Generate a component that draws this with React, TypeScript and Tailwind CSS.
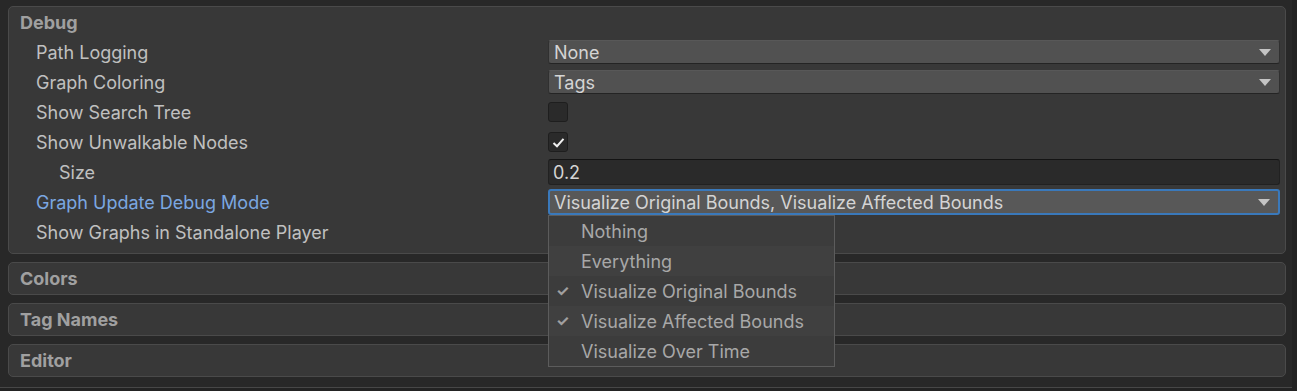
const font = { fontFamily: "Inter, 'Noto Sans', sans-serif" };

function Arrow() {
  return (
    <svg width="12" height="7" viewBox="0 0 12 7" className="shrink-0">
      <path d="M0 0 H12 L6 7 Z" fill="#c4c4c4" />
    </svg>
  );
}

function Dropdown({ value, focused }: { value: string; focused?: boolean }) {
  return (
    <div
      className={`flex flex-1 items-center justify-between rounded-[3px] pr-[8px] ${
        focused
          ? "h-[26px] border-2 border-[#3a79bb] bg-[#585858] pl-[4px]"
          : "h-[24px] border border-[#303030] border-t-[#585858] border-b-[#242424] bg-[#515151] pl-[5px]"
      }`}
    >
      <span className="text-[#d4d4d4]">{value}</span>
      <Arrow />
    </div>
  );
}

function Checkbox({ checked }: { checked?: boolean }) {
  return (
    <div className="flex h-[20px] w-[20px] items-center justify-center rounded-[3px] border border-[#1e1e1e] bg-[#2a2a2a]">
      {checked && (
        <svg width="13" height="11" viewBox="0 0 13 11">
          <path d="M1.5 6 L5 9.2 L11.5 1.8" fill="none" stroke="#f0f0f0" strokeWidth="2" />
        </svg>
      )}
    </div>
  );
}

function Row({
  label,
  indent,
  blue,
  children,
}: {
  label: string;
  indent?: boolean;
  blue?: boolean;
  children?: React.ReactNode;
}) {
  return (
    <div className="flex h-[30px] items-center">
      <div
        className={`w-[539px] shrink-0 ${indent ? "pl-[50px]" : "pl-[27px]"} ${
          blue ? "text-[#7ba7e1]" : "text-[#c0c0c0]"
        }`}
      >
        {label}
      </div>
      <div className="flex flex-1 items-center">{children}</div>
    </div>
  );
}

function Section({ title }: { title: string }) {
  return (
    <div className="flex h-[33px] items-center rounded-[5px] border border-[#4a4a4a] bg-[#383838] pl-[11px]">
      <span className="text-[18px] font-bold text-[#a0a0a0]">{title}</span>
    </div>
  );
}

const menu = [
  { label: "Nothing", checked: false },
  { label: "Everything", checked: false },
  { label: "Visualize Original Bounds", checked: true },
  { label: "Visualize Affected Bounds", checked: true },
  { label: "Visualize Over Time", checked: false },
];

export default function App() {
  return (
    <div
      className="flex h-[391px] w-[1297px] overflow-hidden bg-[#282828] text-[18px]"
      style={font}
    >
      <div className="flex flex-1 flex-col">
        <div className="flex flex-1 flex-col gap-[8px] pl-[8px] pr-[6px] pt-[6px]">
          <div className="relative flex h-[248px] flex-col rounded-[5px] border border-[#4a4a4a] bg-[#383838] pr-[5px]">
            <div className="flex h-[30px] items-center pl-[11px]">
              <span className="text-[18px] font-bold text-[#a0a0a0]">Debug</span>
            </div>
            <Row label="Path Logging">
              <Dropdown value="None" />
            </Row>
            <Row label="Graph Coloring">
              <Dropdown value="Tags" />
            </Row>
            <Row label="Show Search Tree">
              <Checkbox />
            </Row>
            <Row label="Show Unwalkable Nodes">
              <Checkbox checked />
            </Row>
            <Row label="Size" indent>
              <div className="flex h-[26px] flex-1 items-center rounded-[3px] border border-[#212121] border-t-[#141414] bg-[#2a2a2a] pl-[4px] text-[#d4d4d4]">
                0.2
              </div>
            </Row>
            <Row label="Graph Update Debug Mode" blue>
              <Dropdown value="Visualize Original Bounds, Visualize Affected Bounds" focused />
            </Row>
            <Row label="Show Graphs in Standalone Player" />

            <div className="absolute left-[539px] top-[208px] z-10 flex w-[287px] flex-col border border-[#5c5c5c] bg-[#3c3c3c]">
              {menu.map((m, i) => (
                <div
                  key={m.label}
                  className={`flex h-[30px] items-center ${i % 2 === 1 ? "bg-[#404040]" : "bg-[#3c3c3c]"}`}
                >
                  <span className="w-[32px] pl-[7px] text-[15px] font-bold text-[#a0a0a0]">{m.checked ? "✓" : ""}</span>
                  <span className="text-[#a8a8a8]">{m.label}</span>
                </div>
              ))}
            </div>
          </div>
          <Section title="Colors" />
          <Section title="Tag Names" />
          <Section title="Editor" />
        </div>
        <div className="h-[4px] border-t border-[#474747] bg-[#232323]" />
      </div>
      <div className="w-[5px] bg-[#232323]" />
    </div>
  );
}
